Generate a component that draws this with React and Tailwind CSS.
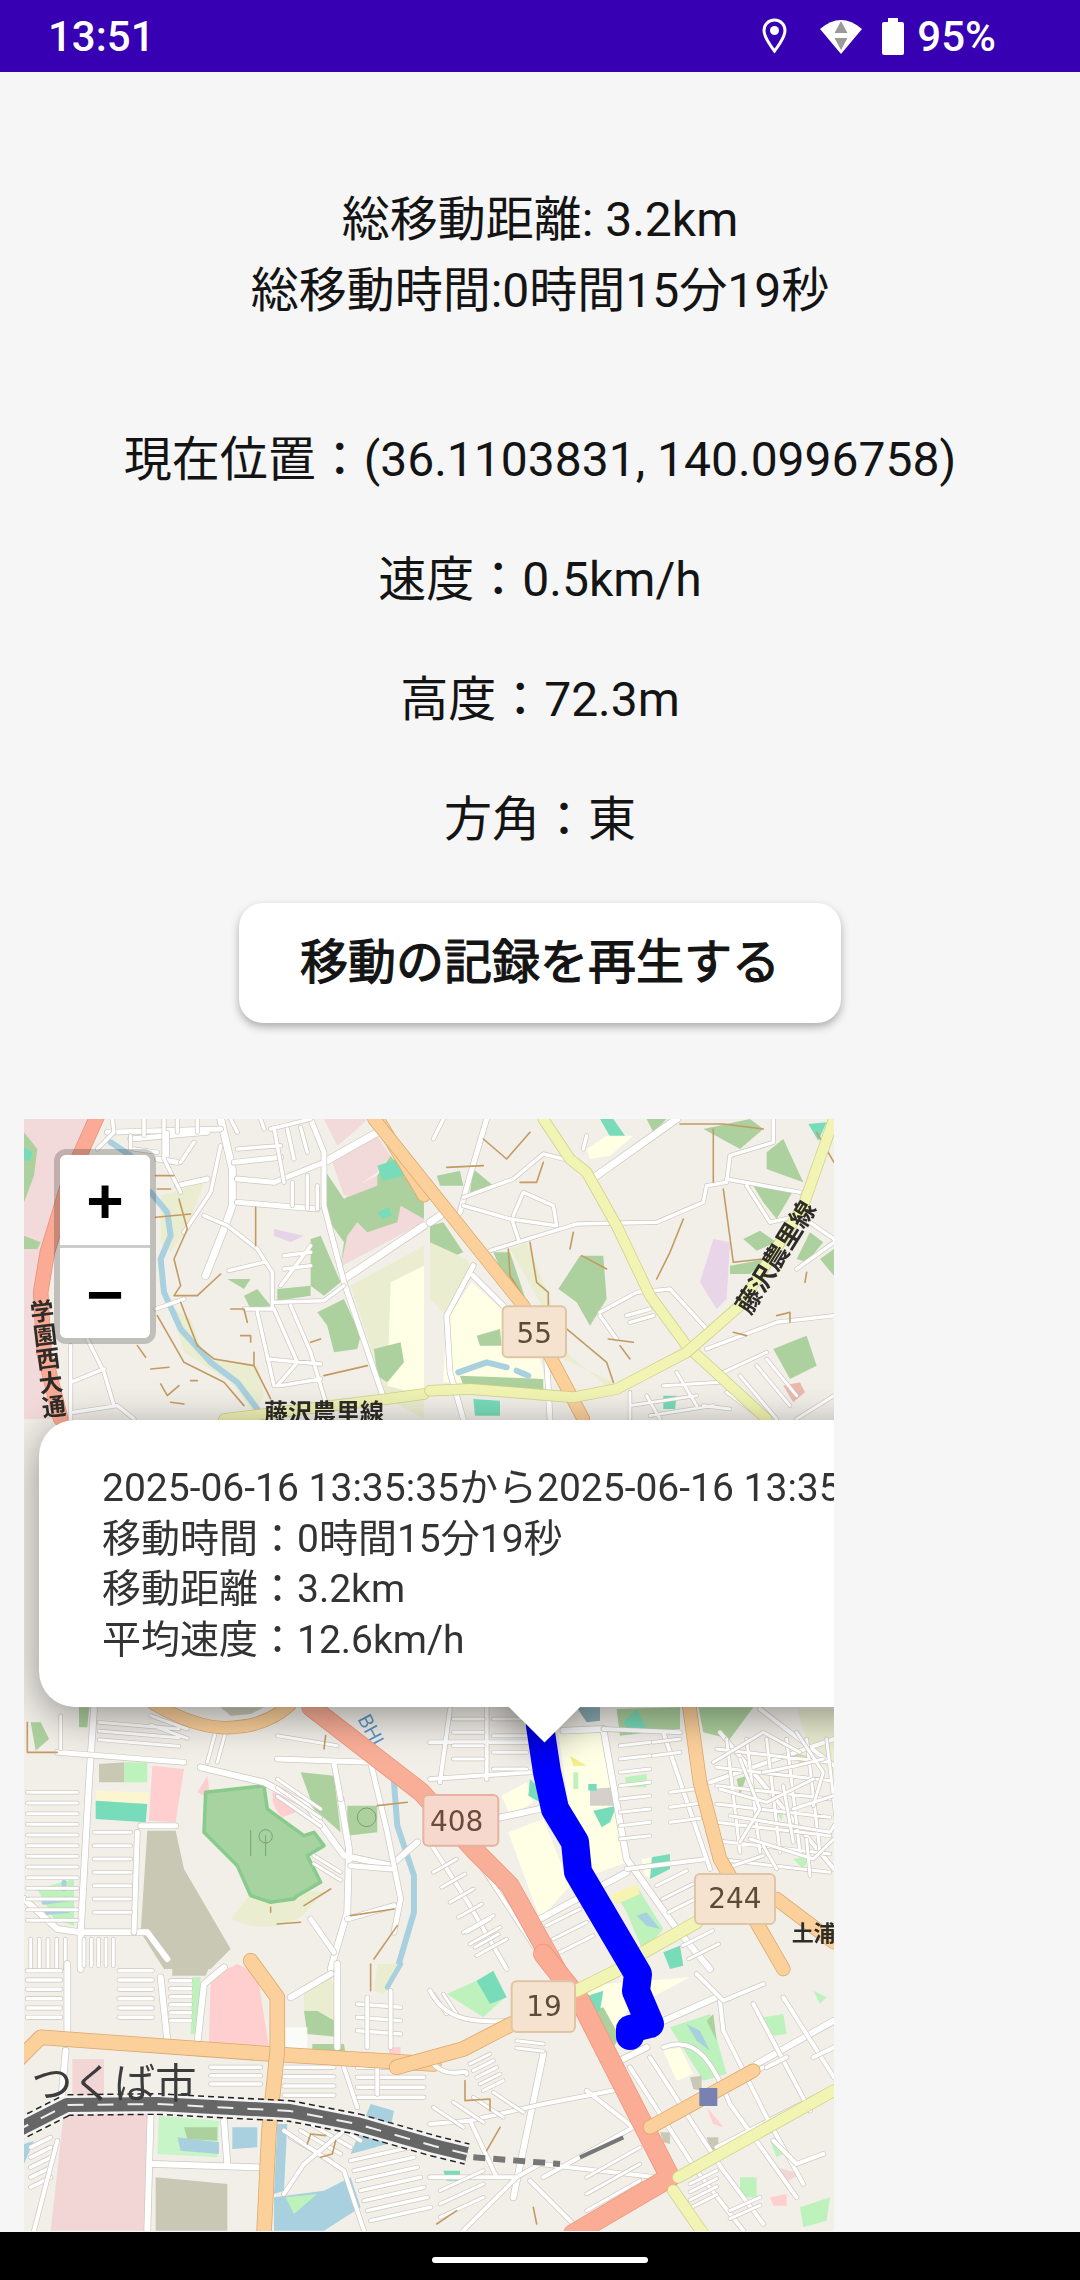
const hatch = (x, y, dx, dy, sx, sy, n) => {
  let d = ''
  for (let i = 0; i < n; i++) d += `M${x + i * sx} ${y + i * sy}l${dx} ${dy}`
  return d
}

// local pieces of the map are written in 3x crop coordinates
const Tile = ({ x, y, children }) => (
  <g transform={`translate(${x - 24} ${y - 1120}) scale(0.3333)`}>{children}</g>
)

const Line = ({ d, w, c, dash, cap = 'round' }) => (
  <path d={d} fill="none" stroke={c} strokeWidth={w} strokeDasharray={dash} strokeLinecap={cap} strokeLinejoin="round" vectorEffect="non-scaling-stroke" />
)

const Streets = ({ d, w = 3 }) => (
  <>
    <Line d={d} w={w + 2.4} c="#cdc8c0" />
    <Line d={d} w={w + 1} c="#ffffff" />
  </>
)

const Road = ({ d, w, c, edge }) => (
  <>
    <Line d={d} w={w + 1.5} c={edge} />
    <Line d={d} w={w} c={c} />
  </>
)

const Area = ({ d, c }) => <path d={d} fill={c} />

const cjk = '"Noto Sans CJK JP", sans-serif'
const green = '#add19e'
const teal = '#78dcba'
const mint = '#bdf2bd'
const cream = '#ffffe5'
const pale = '#eaedd0'
const pink = '#f2dada'
const rose = '#ffcfcf'
const khaki = '#c8c8b4'
const water = '#a9d0de'
const path = '#c39a62'
const rail = 'M14 2133L67 2106L157 2105L290 2112L357 2125L434 2147L467 2155'

function TileMap() {
  return (
    <svg viewBox="0 0 810 1112" className="absolute top-0 left-0 w-[810px] h-[1112px] bg-[#f2efe9]">
      <g className="blur-[0.7px]">
        <Tile x={24} y={1120}>
          <Area d="M0 0L200 0L110 200L50 450L45 540L130 900L0 900Z" c={pink} />
          <Area d="M0 40L40 90L30 170L0 250Z" c={green} />
          <Area d="M0 85L25 100L20 125L0 125Z" c={teal} />
          <Area d="M0 350L50 370L40 390L0 390Z" c={green} />
          <Area d="M925 130L1060 50L1100 110L1060 160L960 230Z" c={pink} />
          <Area d="M900 0L1030 0L1000 30L940 80Z" c={pink} />
          <Area d="M900 150L960 240L1060 170L1100 110L1200 240L1200 300L1130 320L950 440L960 370L910 300Z" c={green} />
          <Area d="M950 440L970 350L1000 310L1030 340L1120 310L1130 260L1200 300L1200 310L955 440Z" c={pink} />
          <Area d="M955 220L1060 170L1060 200L970 235Z" c={pink} />
          <Area d="M1060 140L1120 120L1140 170L1075 185Z" c={teal} />
          <Area d="M1060 280L1095 265L1105 290L1075 300Z" c={teal} />
          <Area d="M980 500L1200 380L1200 900L1090 840L1000 560Z" c={pale} />
          <Area d="M1100 490L1200 440L1200 830L1090 800Z" c={cream} />
          <Area d="M860 360L890 350L950 490L900 530L860 500Z" c={green} />
          <Area d="M880 580L960 540L1010 650L1000 690L930 700L910 620Z" c={green} />
          <Area d="M660 530L700 510L740 560L680 570Z" c={green} />
          <Area d="M610 480L680 480L660 510Z" c={green} />
          <Area d="M760 510L860 500L860 530L760 545Z" c={green} />
          <Area d="M1050 690L1130 670L1140 730L1090 790L1060 770Z" c={green} />
          <Area d="M750 330L840 350L800 370L750 350Z" c="#e6d4e6" />
          <Area d="M410 230L540 190L490 330L440 400L410 370Z" c={pale} />
          <Area d="M440 560L500 600L540 710L700 740L720 830L690 880L620 790L480 700Z" c={pale} />
          <Line d="M260 70L320 110M380 220L430 280L440 350L410 420L420 520L470 630L560 730L640 790L700 870" w={6} c={water} />
          <Streets w={6} d="M590 0L625 150L625 260L600 330L545 470" />
          <Streets w={6} d="M900 130L1060 40M960 480L1200 320" />
          <Streets w={4} d="M860 0L900 100L900 260L960 490L1080 840M750 190L900 130M250 40L590 30M320 60L550 40M630 130L770 115M640 180L750 190M640 250L880 270M400 120L460 130M460 200L550 180" />
          <Streets w={2.5} d="M480 340L560 220L590 80M540 290L610 320L700 390L745 460L745 570L660 570M615 455L720 430M395 570L480 540M750 550L900 545L960 500M700 580L750 800M800 560L860 700L920 900M750 570L820 730L760 800M730 720L890 735M770 800L890 780M140 680L140 900M190 660L240 760L270 860M140 790L240 750M220 90L270 40L265 0M320 50L320 90M420 0L420 120L470 220M740 30L860 0M750 25L780 190M790 30L810 120M830 25L850 100M880 200L880 270M805 190L805 260M850 170L850 270M430 40L430 110M470 130L510 70M770 500L860 380M780 450L860 440M780 410L860 400M360 0L360 50M460 0L460 40M520 0L520 40M640 90L770 80M330 90L400 100M150 880L280 860L330 900M620 0L640 40M710 0L720 30" />
          <Line w={1.6} c={path} d="M395 170L450 170M400 210L440 210M465 240L490 330L450 420L470 500L450 530L520 530L590 465M395 295L500 285M695 265L695 380M470 550L520 680L570 720L690 740L690 700M690 740L740 840M400 590L480 730L600 790L660 860M900 770L1030 740M410 795L430 830L465 800M380 750L435 745M620 570L660 570L670 610M650 650L680 650L680 670M340 680L365 715M860 670L890 660M500 785L520 785M440 850L480 855" />
          <Road d="M225 -20L140 170L70 400L50 520L60 700L110 900" w={14} c="#fbab95" edge="#ea8e78" />
          <Road d="M1050 -20L1200 230" w={12} c="#fcd09b" edge="#dba76a" />
          <Road d="M1200 825L1090 840L600 900" w={10} c="#eff2b4" edge="#cfd08a" />
          <text transform="translate(50 540) rotate(-7)" fontSize="72" fontWeight="700" fontFamily={cjk} fill="#2e2c28" style={{ writingMode: 'vertical-rl' }}>学園西大通</text>
          <text x="720" y="905" fontSize="72" fontWeight="700" fontFamily={cjk} fill="#2e2c28">藤沢農里線</text>
        </Tile>
        <Tile x={430} y={1120}>
          <Area d="M385 510L450 410L520 410L530 540L480 620L440 550Z" c={green} />
          <Area d="M820 30L960 0L1000 30L930 90Z" c={green} />
          <Area d="M1010 100L1060 60L1120 190L1010 150Z" c={green} />
          <Area d="M940 360L990 335L1040 370L980 395Z" c={green} />
          <Area d="M900 440L1010 420L960 465L900 465Z" c={green} />
          <Area d="M970 200L1090 215L1040 300L1000 250Z" c={green} />
          <Area d="M1140 340L1180 370L1130 430L1100 420Z" c={green} />
          <Area d="M1030 690L1130 650L1160 740L1080 780Z" c={green} />
          <Area d="M1170 420L1212 390L1212 470Z" c={green} />
          <Area d="M810 490L850 360L900 370L890 540L860 570Z" c="#e8d6e8" />
          <Area d="M510 0L550 0L585 50L550 70Z" c={teal} />
          <Area d="M470 90L530 50L610 50L540 110L480 120Z" c={cream} />
          <Area d="M650 0L710 0L670 40Z" c={green} />
          <Area d="M1135 15L1190 10L1165 65Z" c={teal} />
          <Area d="M20 170L90 155L100 200L30 200Z" c={green} />
          <Area d="M130 150L190 200L120 220Z" c={green} />
          <Area d="M0 320L40 310L100 400L50 420L0 380Z" c={green} />
          <Area d="M190 400L240 400L290 550L250 540Z" c={green} />
          <Area d="M0 370L110 420L120 440L50 590L0 540Z" c={pale} />
          <Area d="M240 390L290 370L360 540L400 720L550 790L540 810L420 710Z" c={pale} />
          <Area d="M50 600L125 490L215 570L330 720L350 800L40 790Z" c={cream} />
          <Area d="M140 650L210 630L215 680L150 680Z" c={green} />
          <Area d="M90 770L340 780L340 830L100 800Z" c={green} />
          <Line d="M85 760L170 730L230 745M260 755L295 770" w={6} c={water} />
          <Area d="M130 840L210 845L210 890L135 890Z" c={teal} />
          <Area d="M700 830L740 830L735 870L700 870Z" c={teal} />
          <Area d="M1060 800L1110 790L1125 820L1090 850Z" c="#ecb8b0" />
          <Streets w={6} d="M500 170L740 0M0 310L30 290" />
          <Streets w={4} d="M130 440L50 590L60 760L100 900M350 720L360 900M130 470L220 560M170 0L120 170L90 280" />
          <Streets w={2.5} d="M100 235L250 180L340 105L400 120M100 260L240 300L380 320M180 395L440 315L680 310L820 250L830 200L890 190L900 110L1030 70L1030 0M250 290L280 220L370 260L380 320M245 300L265 360M890 180L1110 220M950 200L1020 310L1110 290L1212 360M510 580L620 520L720 510L830 630M510 590L560 660M590 590L660 570M600 610L670 590M830 690L1040 610L1212 590M1100 450L1212 370M470 50L460 90M40 0L10 60" />
          <Streets w={2} d="M600 820L600 900M650 830L690 900M600 860L800 830M740 760L800 860M880 760L1010 700M930 770L1040 900M980 740L1080 860M1010 720L1100 830M1100 900L1212 830M820 860L900 870M700 800L870 790M890 820L1000 900M660 890L850 860" />
          <Line w={1.6} c={path} d="M160 60L230 120L300 40M50 145L160 140M340 130L320 190L270 190M760 300L720 400L680 480M880 210L910 430L1000 420M235 390L240 470L290 550M410 630L530 730L550 790M750 15L880 15L1000 30M850 30L850 190M300 370L320 490L355 520L355 560M430 340L420 390M455 410L530 450M535 660L610 670M570 680L600 720M910 640L950 650M1040 590L1080 580L1080 610M1130 460L1125 490M1160 40L1212 130" />
          <Road d="M-168 0L280 560L460 900" w={12} c="#fcd09b" edge="#dba76a" />
          <Road d="M340 0L420 120L470 160L560 320L660 530L770 680L1010 900" w={10} c="#f1f4b2" edge="#cfd08a" />
          <Road d="M1212 0L1120 260L930 560L770 700L560 810L430 835L120 810L0 815" w={10} c="#f1f4b2" edge="#cfd08a" />
          <rect x="218" y="562" width="190" height="153" rx="15" fill="#f5e3d0" stroke="#e0c5a5" strokeWidth="6" />
          <text x="313" y="672" textAnchor="middle" fontSize="84" fontFamily="DejaVu Sans, sans-serif" fill="#5f4a35">55</text>
          <text transform="translate(960 590) rotate(-58)" fontSize="76" fontWeight="700" fontFamily={cjk} fill="#2e2c28">藤沢農里線</text>
        </Tile>
        <Tile x={24} y={1700}>
          <Area d="M20 70L50 70L75 120L35 155Z" c={green} />
          <Area d="M165 25L195 25L190 85L165 85Z" c={green} />
          <Area d="M385 200L480 210L455 370L375 365Z" c={rose} />
          <Area d="M300 190L370 190L370 250L300 250Z" c={mint} />
          <Area d="M225 195L300 190L300 250L225 250Z" c={khaki} />
          <Area d="M215 275L375 280L375 315L215 305Z" c="#fbf6d0" />
          <Area d="M215 305L370 315L365 370L215 360Z" c={teal} />
          <Area d="M370 395L455 395L480 510L620 750L560 810L420 810L350 700Z" c={khaki} />
          <Area d="M520 280L550 230L560 300Z" c={rose} />
          <Area d="M620 660C700 700 820 690 860 620L900 580L700 560Z" c={pale} />
          <Area d="M545 280L720 260L730 330L840 410L870 400L900 440L850 470L890 550L820 590L810 600L740 610L680 590L640 500L540 400Z" c="#a7d3a0" />
          <Line d="M545 280L720 260L730 330L840 410L870 400L900 440L850 470L890 550L820 590L810 600L740 610L680 590L640 500L540 400Z" w={3.5} c="#88cb8c" />
          <Area d="M745 280C790 290 810 320 815 340L775 355C750 330 745 310 745 280Z" c={rose} />
          <Area d="M830 220L930 230L950 400L870 330Z" c={green} />
          <Area d="M970 320L1060 320L1060 400L970 410Z" c={green} />
          <Area d="M40 570L150 540L150 680L90 660Z" c={mint} />
          <Line d="M60 610L130 600M70 640L130 635M120 550L120 570" w={5} c={water} />
          <Line d="M1110 250L1120 380L1170 530L1170 640L1120 810" w={6} c={water} />
          <Line d="M680 395V470M725 410V470" w={1} c="#7c9c78" />
          <circle cx="725" cy="412" r="20" fill="none" stroke="#7c9c78" strokeWidth="3" />
          <circle cx="1028" cy="355" r="28" fill="none" stroke="#7c9c78" strokeWidth="3" />
          <Streets w={5} d="M210 30L195 250L170 700L170 810M530 205L720 250L850 320L960 470L1100 500L1180 430M0 600L100 690L170 700L370 700L430 780M950 300L975 450L970 640L920 810" />
          <Streets w={4} d="M100 160L480 190M350 380L455 380M340 400L330 700M760 180L1040 190M930 190L950 300M1040 190L1090 400L1130 600L1110 700M980 500L1100 510M970 660L1110 620M860 660L930 760" />
          <Streets w={2} d={hatch(10, 280, 150, 0, 0, 32, 13) + hatch(225, 70, 240, 20, 0, 26, 3) + hatch(380, 50, 110, 40, 0, 28, 2) + hatch(210, 400, 110, 0, 0, 40, 7) + hatch(580, 80, -30, 110, 30, 0, 2) + hatch(20, 720, 0, 90, 26, 0, 5) + hatch(180, 720, 0, 80, 22, 0, 5) + hatch(760, 240, 130, 90, 0, 26, 3) + hatch(870, 470, 80, 50, 0, 24, 2) + hatch(110, 50, 0, 100, 0, 0, 1) + hatch(760, 110, 180, 30, 0, 0, 1)} />
          <Line w={1.6} c={path} d="M1060 320L1150 310M1110 630L980 650M840 620L920 570M760 675L830 670M905 110L900 150M740 625L740 640M1050 780L1120 680M10 70L10 160L100 160" />
          <Road d="M390 15Q530 95 630 85Q730 80 800 15" w={12} c="#fcd09b" edge="#dba76a" />
          <Area d="M590 25L720 25L680 45L620 50Z" c={khaki} />
          <text transform="translate(1000 60) rotate(62)" fontSize="60" fontFamily="Roboto, sans-serif" fill="#5e96c8">BHI</text>
        </Tile>
        <Tile x={430} y={1700}>
          <Area d="M385 100L525 100L590 490L480 530L420 340Z" c={cream} />
          <Area d="M235 400L340 360L420 560L330 660Z" c={cream} />
          <Area d="M215 290L290 250L310 310L240 350Z" c={cream} />
          <Area d="M300 240L330 270L330 310L295 290Z" c={teal} />
          <Area d="M480 270L555 265L555 320L480 320Z" c="#d5d0cc" />
          <Area d="M490 335L560 320L540 370L515 385Z" c={teal} />
          <Area d="M420 170L470 200L430 200Z" c="#f4ee8c" />
          <Area d="M430 220L445 220L445 270L430 270Z" c={mint} />
          <Area d="M475 255L500 255L500 275L475 275Z" c={teal} />
          <Area d="M440 25L510 25L510 65L470 70Z" c="#8fb0b8" />
          <Area d="M560 30L750 25L750 90L570 110Z" c={green} />
          <Area d="M580 70L620 30L650 90L600 105Z" c={teal} />
          <Area d="M805 25L970 25L900 120L820 100Z" c={green} />
          <Area d="M1100 30L1212 30L1212 240L1130 120Z" c={pale} />
          <Area d="M585 235L650 225L650 265L590 265Z" c={mint} />
          <Area d="M560 590L620 560L700 690L640 760L590 640Z" c={mint} />
          <Area d="M620 650L650 640L690 690L650 680Z" c={water} />
          <Area d="M540 590L620 555L630 585L560 615Z" c="#f8f3b0" />
          <Area d="M665 475L720 465L720 510L660 540Z" c={teal} />
          <Area d="M635 480L665 475L660 535L645 530Z" c={cream} />
          <Area d="M700 760L750 740L760 800L720 810Z" c={teal} />
          <Area d="M480 130L540 130L520 145Z" c={cream} />
          <Area d="M920 240L950 230L930 290Z" c={green} />
          <Area d="M1090 160L1160 180L1110 195Z" c="#dbd8a8" />
          <Area d="M1040 340L1060 340L1055 365Z" c={mint} />
          <Area d="M1090 480L1140 470L1120 510Z" c={mint} />
          <Streets w={5} d="M520 90L590 480L740 690L840 810M590 520L330 660M0 400L330 330M400 95L520 90" />
          <Streets w={3} d="M520 90L750 100M590 510L830 480M60 30L30 250M170 25L170 240M290 25L320 240M0 130L290 130M0 240L300 220M0 430L120 620L230 810M120 450L330 770M700 100L840 510M840 250L1212 120M870 100L1212 510M990 30L1212 200" />
          <Streets w={2} d={hatch(570, 140, 90, -10, 0, 40, 8) + hatch(670, 130, 80, -10, 0, 40, 2) + hatch(720, 280, 90, -12, 0, 45, 3) + hatch(70, 60, 90, 0, 0, 40, 4) + hatch(190, 60, 100, 0, 0, 50, 4) + hatch(10, 520, 70, -40, 25, 45, 6) + hatch(100, 700, 90, -50, 20, 35, 3) + hatch(680, 560, 90, -45, 18, 40, 3) + hatch(740, 700, 90, -45, 18, 40, 3) + hatch(350, 680, 100, -50, 20, 40, 3) + hatch(860, 150, 340, 40, 0, 55, 7) + hatch(890, 120, 40, 340, 60, 0, 6)} />
          <Streets w={2} d="M850 190L1000 100L1110 160M870 270L1010 310L1150 240M930 180L990 330L930 430M1000 220L1100 200L1180 180M1060 260L1090 430M900 350L1200 400L1212 380M960 420L1150 480L1212 420M1100 100L1180 220L1150 320M1000 440L1040 510M1090 330L1212 290M1130 420L1140 530M880 510L1000 470" />
          <Road d="M-357 24L-27 279L130 450L240 560L340 740L390 830" w={18} c="#f9ae97" edge="#ec957c" />
          <Road d="M775 0L810 250L870 480L1060 810" w={13} c="#fcd09b" edge="#dba76a" />
          <Road d="M1040 600L1212 730" w={13} c="#fcd09b" edge="#dba76a" />
          <Road d="M640 760L800 670" w={12} c="#f1f4b2" edge="#cfd08a" />
          <rect x="-20" y="288" width="225" height="152" rx="15" fill="#f6d8cc" stroke="#e6b3a1" strokeWidth="6" />
          <text x="80" y="395" textAnchor="middle" fontSize="84" fontFamily="DejaVu Sans, sans-serif" fill="#6a4a38">408</text>
          <rect x="795" y="525" width="240" height="150" rx="15" fill="#f5e3d0" stroke="#dfc5a5" strokeWidth="6" />
          <text x="915" y="628" textAnchor="middle" fontSize="84" fontFamily="DejaVu Sans, sans-serif" fill="#5f4a35">244</text>
          <text x="1085" y="725" fontSize="66" fontWeight="700" fontFamily={cjk} fill="#2e2c28">土浦</text>
        </Tile>
        <Tile x={24} y={1965}>
          <Area d="M560 40L640 0L700 30L735 250L555 240Z" c={rose} />
          <Area d="M120 440L375 430L375 800L80 800Z" c="#f2d6d6" />
          <Area d="M145 285L240 285L240 400L145 400Z" c="#f2d6d6" />
          <Area d="M395 640L610 660L610 800L395 800Z" c={khaki} />
          <Area d="M405 455L585 470L580 580L400 570Z" c="#c8f5c8" />
          <Area d="M460 520L585 535L585 570L470 560Z" c={water} />
          <Area d="M480 490L580 490L580 530L490 525Z" c={green} />
          <Area d="M625 490L700 490L700 550L625 555Z" c={water} />
          <Area d="M750 700L900 680L980 640L1010 730L900 800L750 800Z" c={water} />
          <Area d="M760 480L790 480L780 680L750 690Z" c={water} />
          <Area d="M1040 420L1110 440L1090 540L980 570Z" c={water} />
          <Area d="M0 540L30 530L0 600Z" c={water} />
          <Area d="M840 140L880 140L950 180L950 220L850 210Z" c={green} />
          <Area d="M840 60L920 30L950 180L880 140L840 140Z" c={pale} />
          <Area d="M865 240L960 240L965 270L865 265Z" c={green} />
          <Area d="M1095 250L1130 250L1130 285L1095 280Z" c={rose} />
          <Area d="M785 700L880 690L810 750Z" c={mint} />
          <Area d="M505 40L530 40L520 210L500 210Z" c={mint} />
          <Area d="M445 0L560 0L545 35L445 35Z" c={khaki} />
          <Area d="M1060 0L1140 0L1080 90L1050 80Z" c={pale} />
          <Line d="M1130 0L1090 70" w={5} c={water} />
          <Area d="M785 190L850 190L850 260L785 260Z" c="#fbfbf8" />
          <Streets w={5} d="M130 0L130 200M125 260L110 430M410 40L430 230M520 240L540 60L600 10M380 440L370 800M390 600L700 610M600 470L610 600M800 100L920 30M940 0L940 250" />
          <Streets w={2.5} d={hatch(10, 20, 100, 0, 0, 28, 6) + hatch(285, 20, 100, 0, 0, 28, 6) + hatch(440, 50, 60, 0, 0, 24, 6) + hatch(780, 310, 150, 0, 0, 28, 4) + hatch(560, 310, 150, 0, 0, 25, 3) + hatch(980, 590, 180, -40, 10, 30, 7) + hatch(20, 550, 60, -30, 0, 30, 5) + hatch(1000, 120, 130, 10, 0, 40, 3) + hatch(1000, 310, 200, 0, 0, 30, 4) + hatch(800, 520, 120, 70, 30, -20, 4)} />
          <Streets w={3} d="M780 500L960 620L1020 800M960 500L840 600L780 690M1100 80L1100 250M1030 100L1030 250M960 310L1000 430M1060 310L1060 390M30 800L100 530" />
          <Line w={1.6} c={path} d="M850 540L860 510L905 515M890 580L925 570L935 530M1040 0L1040 80" />
          <Road d="M-50 320L50 220L120 225L740 270L1230 300" w={14} c="#fcd09b" edge="#dba76a" />
          <Road d="M680 -10L760 100L760 260L735 500L720 810" w={14} c="#fcd09b" edge="#dba76a" />
        </Tile>
        <Tile x={430} y={1965}>
          <Area d="M50 90L140 50L225 100L160 160Z" c={mint} />
          <Area d="M140 50L190 20L230 100L180 120Z" c={teal} />
          <Area d="M450 100L520 60L780 40L590 140L540 260Z" c={cream} />
          <Area d="M490 140L520 130L570 220L550 250Z" c={green} />
          <Area d="M460 100L520 80L510 140L490 150Z" c={teal} />
          <Area d="M720 190L840 150L890 330L820 350Z" c={mint} />
          <Area d="M770 180L810 200L840 260L800 230Z" c={water} />
          <Area d="M830 170L850 150L860 230Z" c={green} />
          <Area d="M700 260L750 250L790 330L740 350Z" c={cream} />
          <Area d="M780 340L815 335L815 380L790 375Z" c={khaki} />
          <Area d="M830 430L865 470L880 490L850 480Z" c={rose} />
          <Area d="M830 520L865 520L865 560L840 555Z" c={khaki} />
          <Area d="M690 505L720 505L720 540L700 535Z" c={khaki} />
          <Area d="M1000 160L1060 150L1070 210L1030 215Z" c={mint} />
          <Area d="M930 640L980 640L980 700L930 700Z" c={mint} />
          <Area d="M1110 730L1200 700L1190 770L1120 790Z" c={mint} />
          <Area d="M1040 610L1110 630L1060 660Z" c="#f2d6d6" />
          <Area d="M1020 700L1070 690L1070 725L1030 725Z" c={rose} />
          <Area d="M1020 530L1060 570L1040 580Z" c={mint} />
          <Area d="M1150 80L1190 100L1170 120Z" c={mint} />
          <Area d="M40 620L90 620L90 650L50 650Z" c={teal} />
          <Streets w={5} d="M980 300L1212 170M680 180L860 100M340 270L250 700M570 290L650 250" />
          <Streets w={3} d="M600 310L800 620L940 800M660 280L880 620L1000 780M700 250C800 210 850 300 900 420L1100 700M870 110L880 200L1010 460L1120 660M970 120L1140 440M1060 100L1212 340M860 550L1212 370M680 490L1000 310M0 480L120 470L340 420L600 370M0 640L260 640M300 650L450 800M120 470L200 640M470 380L610 490L340 640M100 800L260 640L330 600L680 640" />
          <Streets w={2} d={hatch(120, 300, 60, -30, 10, 20, 5) + hatch(260, 230, 80, 10, 0, 22, 2) + hatch(780, 660, 80, -40, 0, 24, 4) + hatch(900, 740, 90, -40, 0, 24, 2) + hatch(10, 90, 40, 60, 30, 0, 2) + hatch(10, 430, 90, 60, 60, -15, 4) + hatch(30, 680, 130, -60, 0, 40, 3) + hatch(470, 640, 160, -90, 0, 50, 3)} />
          <Streets w={3} d="M10 300C60 350 110 310 110 330M0 80C40 160 110 180 250 170M800 30L880 110L1000 60M1070 280L1010 310M1150 280L1212 250M1030 530L1100 600L1180 570" />
          <Line w={1.6} c={path} d="M105 350L105 410L180 405L180 440M210 490L170 560M20 780L80 740M310 730L320 780" />
          <Line d="M130 580L390 600" w={6} c="#777" dash="12 8" cap="butt" />
          <Line d="M450 580L580 520" w={4} c="#777" cap="butt" />
          <Road d="M340 -30L450 110L720 640L430 810" w={19} c="#fbac95" edge="#ef937b" />
          <Road d="M660 490L970 320" w={13} c="#fcd09b" edge="#dba76a" />
          <Road d="M745 640L1212 380" w={11} c="#f1f4b2" edge="#cfd08a" />
          <Road d="M730 680L820 810" w={11} c="#f1f4b2" edge="#cfd08a" />
          <Road d="M440 80L560 20" w={12} c="#f1f4b2" edge="#cfd08a" />
          <Road d="M-100 310L100 255L245 180" w={14} c="#fcd09b" edge="#dba76a" />
          <rect x="245" y="52" width="190" height="152" rx="15" fill="#f5e3d0" stroke="#dfc5a5" strokeWidth="6" />
          <text x="342" y="155" textAnchor="middle" fontSize="84" fontFamily="DejaVu Sans, sans-serif" fill="#5f4a35">19</text>
          <rect x="808" y="372" width="54" height="54" fill="#7981b1" />
        </Tile>
        {/* railway, in map pixels */}
        <g transform="translate(-24 -1120)">
          <Line d={rail} w={22} c="#222" dash="6 4" cap="butt" />
          <Line d={rail} w={19} c="#f4f4f4" cap="butt" />
          <Line d={rail} w={14} c="#666" cap="butt" />
          <Line d={rail} w={2} c="#eee" dash="16 14" cap="butt" />
        </g>
        <Tile x={24} y={1965}>
          <text x="22" y="402" fontSize="124" fontFamily={cjk} fill="#3c3c3c">つくば市</text>
        </Tile>
      </g>
      {/* recorded track */}
      <path
        d="M538 1700L540 1727L547 1773L555 1810L575 1843L578 1873L638 1975L636 1992L650 2025L630 2030L630 2037"
        transform="translate(-24 -1120)"
        fill="none"
        stroke="#0000ff"
        strokeWidth="28"
        strokeLinecap="round"
        strokeLinejoin="round"
      />
    </svg>
  )
}

function MapPanel() {
  return (
    <div className="relative mt-[96px] ml-[24px] min-h-0 w-[810px] flex-1 self-start overflow-hidden">
      <TileMap />
      <div className="absolute top-[30px] left-[30px] w-[102px] rounded-[12px] border-[6px] border-black/20 bg-clip-padding font-['DejaVu_Sans_Mono',monospace] text-[60px] font-bold text-black">
        <div className="flex h-[93px] items-center justify-center rounded-t-[6px] border-b-[3px] border-[#ccc] bg-white leading-[90px]">+</div>
        <div className="flex h-[90px] items-center justify-center rounded-b-[6px] bg-white leading-[90px]">−</div>
      </div>
      <div className="absolute top-[301px] left-[15px]">
        <div className="w-[1000px] rounded-[36px] bg-white pt-[43px] pr-[72px] pb-[41px] pl-[63px] text-[39px] leading-[50.7px] whitespace-nowrap text-[#333] shadow-[0_9px_42px_rgba(0,0,0,0.4)]">
          <div>2025-06-16 13:35:35から2025-06-16 13:35:35</div>
          <div>移動時間：0時間15分19秒</div>
          <div>移動距離：3.2km</div>
          <div>平均速度：12.6km/h</div>
        </div>
        <div className="absolute top-[287px] left-[445px] h-[60px] w-[120px] overflow-hidden">
          <div className="mx-auto -mt-[26px] h-[51px] w-[51px] rotate-45 bg-white shadow-[0_9px_42px_rgba(0,0,0,0.4)]" />
        </div>
      </div>
    </div>
  )
}

function StatusBar() {
  return (
    <div className="flex h-[72px] shrink-0 items-center bg-[#3700b3] pr-[84px] pl-[48px] font-['Roboto',sans-serif] text-[42px] font-medium text-white">
      <span>13:51</span>
      <div className="ml-auto flex items-center">
        <svg viewBox="0 0 25 36" className="h-[36px] w-[25px]">
          <path d="M12.5 2C6 2 2 7 2 12.5C2 20 12.5 33 12.5 33C12.5 33 23 20 23 12.5C23 7 19 2 12.5 2Z" fill="none" stroke="#fff" strokeWidth="3" />
          <circle cx="12.5" cy="12.5" r="4.5" fill="#fff" />
        </svg>
        <svg viewBox="0 0 44 38" className="ml-[32px] h-[38px] w-[44px]">
          <path d="M22 37L1 12Q22 -6 43 12Z" fill="#fff" />
          <path d="M22 4L15.5 16H28.5Z M15.5 21H28.5L22 33Z" fill="#9a9a9a" />
        </svg>
        <svg viewBox="0 0 22 37" className="ml-[19px] h-[37px] w-[22px]">
          <path d="M6 0H16V4H20Q22 4 22 6V35Q22 37 20 37H2Q0 37 0 35V6Q0 4 2 4H6Z" fill="#fff" />
        </svg>
        <span className="ml-[13px]">95%</span>
      </div>
    </div>
  )
}

export default function App() {
  const rows = ['現在位置：(36.1103831, 140.0996758)', '速度：0.5km/h', '高度：72.3m', '方角：東']

  return (
    <div className="flex h-[2280px] w-[1080px] flex-col overflow-hidden bg-[#f6f6f6] font-['Roboto','Noto_Sans_CJK_JP',sans-serif] text-[#141414]">
      <StatusBar />
      <div className="flex min-h-0 flex-1 flex-col items-center">
        <div className="mt-[112px] text-center text-[48px] leading-[71px]">
          <p>総移動距離: 3.2km</p>
          <p>総移動時間:0時間15分19秒</p>
        </div>
        <div className="mt-[98px] flex flex-col gap-[49px] text-center text-[48px] leading-[71px]">
          {rows.map(r => (
            <p key={r}>{r}</p>
          ))}
        </div>
        <button className="mt-[48px] h-[120px] w-[602px] shrink-0 rounded-[24px] bg-white text-[48px] font-normal [-webkit-text-stroke:1.2px_#141414] shadow-[0_4px_8px_rgba(0,0,0,0.3)]">
          移動の記録を再生する
        </button>
        <MapPanel />
      </div>
      <div className="flex h-[48px] shrink-0 justify-center bg-black pt-[25px]">
        <div className="h-[6px] w-[216px] rounded-full bg-white" />
      </div>
    </div>
  )
}
